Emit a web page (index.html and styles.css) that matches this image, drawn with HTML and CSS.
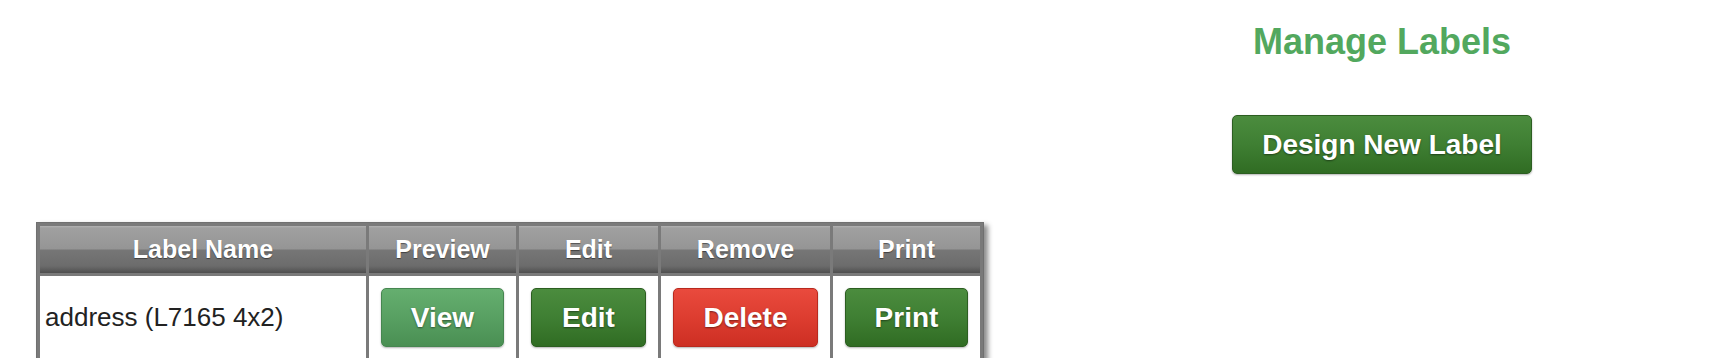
FILE: index.html
```html
<!DOCTYPE html>
<html lang="en">
<head>
<meta charset="utf-8">
<title>Manage Labels</title>
<link rel="stylesheet" href="styles.css">
</head>
<body>
<div class="top">
  <div class="panel">
    <h1 class="title">Manage Labels</h1>
    <a class="btn btn-green btn-design" href="#">Design New Label</a>
  </div>
</div>
<div class="list">
  <table class="labels">
    <thead>
      <tr>
        <th class="c-name">Label Name</th>
        <th class="c-preview">Preview</th>
        <th class="c-edit">Edit</th>
        <th class="c-remove">Remove</th>
        <th class="c-print">Print</th>
      </tr>
    </thead>
    <tbody>
      <tr>
        <td class="name">address (L7165 4x2)</td>
        <td><a class="btn btn-light" href="#">View</a></td>
        <td><a class="btn btn-green" href="#">Edit</a></td>
        <td><a class="btn btn-red" href="#">Delete</a></td>
        <td><a class="btn btn-green" href="#">Print</a></td>
      </tr>
    </tbody>
  </table>
</div>
</body>
</html>
```
FILE: styles.css
```css
html, body {
  margin: 0;
  padding: 0;
  background: #ffffff;
  font-family: "Liberation Sans", Arial, Helvetica, sans-serif;
}

.top {
  display: grid;
  grid-template-columns: 1fr 692px;
  padding: 0 8px;
}

.panel {
  grid-column: 2;
  text-align: center;
}

.title {
  margin: 0;
  padding-top: 22px;
  font-size: 36px;
  line-height: 40px;
  font-weight: bold;
  color: #52a85e;
}

.btn {
  display: flex;
  align-items: center;
  justify-content: center;
  box-sizing: border-box;
  height: 59px;
  border-radius: 5px;
  font-size: 28px;
  font-weight: bold;
  color: #ffffff;
  text-decoration: none;
  text-shadow: 0 1px 2px rgba(0, 0, 0, 0.45);
  box-shadow: 0 1px 2px rgba(0, 0, 0, 0.3);
}

.btn-green {
  background: linear-gradient(to bottom, #4b8c3e 0%, #3f7f33 50%, #306c23 100%);
  border: 1px solid #2c5e21;
}

.btn-light {
  background: linear-gradient(to bottom, #65ae6f 0%, #58a062 50%, #4a8f53 100%);
  border: 1px solid #468650;
}

.btn-red {
  background: linear-gradient(to bottom, #e94a3d 0%, #dd3d30 50%, #cd2f23 100%);
  border: 1px solid #b8291e;
}

.btn-design {
  width: 300px;
  margin: 53px auto 0;
}

.list {
  padding: 48px 0 0 36px;
}

.labels {
  table-layout: fixed;
  border-collapse: separate;
  border-spacing: 3px;
  border: 1px solid #707070;
  background: #7a7a7a;
  box-shadow: 4px 3px 5px rgba(0, 0, 0, 0.45);
}

.labels th {
  height: 47px;
  padding: 0;
  font-size: 25px;
  font-weight: bold;
  color: #ffffff;
  text-align: center;
  text-shadow: 0 1px 1px rgba(0, 0, 0, 0.45);
  background: linear-gradient(to bottom, #b2b2b2 0px, #a0a0a0 2px, #959595 48%, #767676 52%, #6c6c6c 85%, #4f4f4f 100%);
}

.c-name { width: 326px; }
.c-preview { width: 147px; }
.c-edit { width: 139px; }
.c-remove { width: 169px; }
.c-print { width: 147px; }

.labels td {
  background: #ffffff;
  padding: 12px 12px 13px;
  vertical-align: middle;
}

.labels td.name {
  padding-left: 5px;
  font-size: 26px;
  color: #222222;
}
```
